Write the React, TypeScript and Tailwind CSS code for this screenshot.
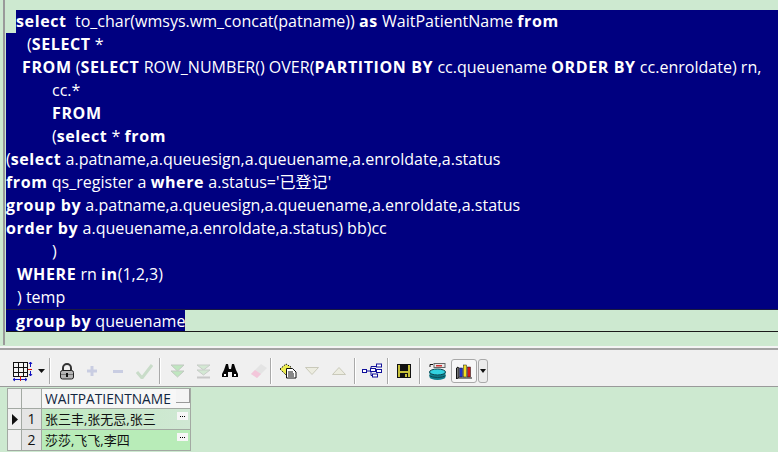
const kw = 'font-bold tracking-[0.6px]'

type Part = [string, boolean?]

const lines: { indent: string; parts: Part[] }[] = [
  { indent: 'pl-[21px]', parts: [['('], ['SELECT', true], [' *']] },
  { indent: 'pl-[16px]', parts: [['FROM', true], [' ('], ['SELECT', true], [' ROW_NUMBER() OVER('], ['PARTITION BY', true], [' cc.queuename '], ['ORDER BY', true], [' cc.enroldate) rn,']] },
  { indent: 'pl-[46px]', parts: [['cc.*']] },
  { indent: 'pl-[46px]', parts: [['FROM', true]] },
  { indent: 'pl-[46px]', parts: [['('], ['select', true], [' * '], ['from', true]] },
  { indent: 'pl-0', parts: [['('], ['select', true], [' a.patname,a.queuesign,a.queuename,a.enroldate,a.status']] },
  { indent: 'pl-0', parts: [['from', true], [' qs_register a '], ['where', true], [" a.status='已登记'"]] },
  { indent: 'pl-0', parts: [['group by', true], [' a.patname,a.queuesign,a.queuename,a.enroldate,a.status']] },
  { indent: 'pl-0', parts: [['order by', true], [' a.queuename,a.enroldate,a.status) bb)cc']] },
  { indent: 'pl-[46px]', parts: [[')']] },
  { indent: 'pl-[11px]', parts: [['WHERE', true], [' rn '], ['in', true], ['(1,2,3)']] },
  { indent: 'pl-[11px]', parts: [[') temp']] },
]

function Code({ parts }: { parts: Part[] }) {
  return (
    <>
      {parts.map(([text, bold], i) => (
        <span key={i} className={bold ? kw : ''}>
          {text}
        </span>
      ))}
    </>
  )
}

function Sep({ className }: { className: string }) {
  return <div className={`w-[2px] h-[26px] bg-[#a9a9a9] border-r border-white shrink-0 ${className}`} />
}

function Toolbar() {
  return (
    <div className="h-[37px] pt-[6px] bg-[#f0f0f0] border-b border-[#9a9a9a] flex items-center">
      {/* grid options */}
      <svg className="ml-[13px] shrink-0" width="20" height="21" viewBox="0 0 20 21">
        <rect x="0.500" y="1.500" width="14" height="14" fill="#f4f4f4" stroke="#111" />
        <path d="M5.500 1v15M10.500 1v15M0 6.500h15M0 11.500h15" stroke="#111" />
        <path d="M15 8.500h4" stroke="#d01010" />
        <path d="M17.500 1v5M17.500 10v5M16 3l1.500-2 1.500 2M16 13l1.500 2 1.500-2" stroke="#1010c0" fill="none" />
        <path d="M0 18.500h14M2 17l-2 1.500 2 1.500M12 17l2 1.500-2 1.500" stroke="#1010c0" fill="none" />
        <path d="M7.500 15v5" stroke="#d01010" />
      </svg>
      <svg className="ml-[5px] shrink-0" width="7" height="4" viewBox="0 0 7 4">
        <path d="M0 0h7L3.500 4z" fill="#111" />
      </svg>
      <Sep className="ml-[4px]" />
      {/* lock */}
      <svg className="ml-[9px] shrink-0" width="14" height="17" viewBox="0 0 14 17">
        <path d="M3 8V5a4 4 0 0 1 8 0v3" fill="none" stroke="#333" strokeWidth="2" />
        <rect x="0.500" y="7.500" width="13" height="8.500" rx="2" fill="#b5b5b5" stroke="#222" />
        <path d="M1 11.500h12" stroke="#777" />
        <rect x="6" y="10" width="2" height="4" fill="#111" />
      </svg>
      {/* plus */}
      <svg className="ml-[13px] shrink-0" width="10" height="10" viewBox="0 0 10 10">
        <path d="M3.500 0h3v3.500H10v3H6.500V10h-3V6.500H0v-3h3.500z" fill="#c9cde2" />
      </svg>
      {/* minus */}
      <svg className="ml-[16px] shrink-0" width="10" height="3" viewBox="0 0 10 3">
        <rect width="10" height="3" fill="#c9cde2" />
      </svg>
      {/* check */}
      <svg className="ml-[13px] shrink-0" width="17" height="15" viewBox="0 0 17 15">
        <path d="M1 8l5 6L16 1" fill="none" stroke="#c9dcc9" strokeWidth="3" />
      </svg>
      <Sep className="ml-[6px]" />
      {/* next + last record */}
      <svg className="ml-[9px] shrink-0" width="15" height="15" viewBox="0 0 15 15">
        <path d="M1 1h13L7.500 7z" fill="#bfe6bf" stroke="#c2c9c2" />
        <path d="M1 7h13l-6.500 6z" fill="#bfe6bf" stroke="#c2c9c2" />
      </svg>
      <svg className="ml-[11px] shrink-0" width="15" height="15" viewBox="0 0 15 15">
        <path d="M1 1h13L7.500 6z" fill="#d3e8d3" stroke="#c8cdc8" />
        <path d="M1 6h13l-6.500 5z" fill="#d3e8d3" stroke="#c8cdc8" />
        <path d="M1 13.500h13" stroke="#c8c8c8" strokeWidth="2" />
      </svg>
      {/* find */}
      <svg className="ml-[11px] shrink-0" width="16" height="14" viewBox="0 0 16 14">
        <path d="M4 0h2l1 5h2l1-5h2l2 6 2 4v3H10V8H6v5H0v-3l2-4z" fill="#050505" />
        <rect x="2" y="10" width="2" height="2" fill="#fff" />
        <rect x="12" y="10" width="2" height="2" fill="#fff" />
      </svg>
      {/* eraser */}
      <svg className="ml-[12px] shrink-0" width="18" height="17" viewBox="0 0 18 17">
        <path d="M1 11L11 1l6 4-10 10z" fill="#e4e4e4" />
        <path d="M1 11l4-4 6 4-4 4z" fill="#f3c6da" />
      </svg>
      <Sep className="ml-[2px]" />
      {/* clear / document */}
      <svg className="ml-[7px] shrink-0" width="18" height="16" viewBox="0 0 18 16">
        <path d="M1 6l6-5 5 3-5 8z" fill="#ecec50" stroke="#222" strokeDasharray="1.500 1" />
        <path d="M7.500 5.500h6l3.500 3.500v6H7.500z" fill="#fff" stroke="#111" />
        <path d="M9 9h5M9 11h6M9 13h6" stroke="#111" />
      </svg>
      {/* sort down / up */}
      <svg className="ml-[8px] shrink-0" width="14" height="8" viewBox="0 0 14 8">
        <path d="M0.500 0.500h13L7 7.500z" fill="#ecece0" stroke="#c9c9ba" />
      </svg>
      <svg className="ml-[13px] shrink-0" width="14" height="8" viewBox="0 0 14 8">
        <path d="M0.500 7.500h13L7 0.500z" fill="#ecece0" stroke="#c9c9ba" />
      </svg>
      <Sep className="ml-[8px]" />
      {/* tree */}
      <svg className="ml-[6px] shrink-0" width="20" height="16" viewBox="0 0 20 16">
        <path d="M5 8h4M9 3.500v9M9 3.500h6M9 8h6M9 12.500h6" stroke="#10109a" fill="none" />
        <rect x="0.500" y="6.500" width="4" height="3" fill="#fff" stroke="#10109a" />
        <rect x="14.500" y="1" width="5" height="3" fill="#fff" stroke="#10109a" />
        <rect x="8.500" y="5.500" width="5" height="3" fill="#fff" stroke="#10109a" />
        <rect x="14.500" y="6.500" width="5" height="3" fill="#fff" stroke="#10109a" />
        <rect x="10.500" y="11" width="5" height="3" fill="#fff" stroke="#10109a" />
      </svg>
      <Sep className="ml-[5px]" />
      {/* save */}
      <svg className="ml-[8px] shrink-0" width="14" height="14" viewBox="0 0 14 14">
        <rect width="14" height="14" fill="#111" />
        <rect x="1" y="1" width="12" height="12" fill="#c7c13a" />
        <rect x="3" y="1" width="8" height="6" fill="#111" />
        <rect x="3" y="9" width="8" height="5" fill="#111" />
        <rect x="8" y="10" width="2" height="3" fill="#c7c13a" />
      </svg>
      <Sep className="ml-[8px]" />
      {/* fetch to db */}
      <svg className="ml-[8px] shrink-0" width="17" height="17" viewBox="0 0 17 17">
        <path d="M1 4V1.500M1 1.500h3" stroke="#111" fill="none" />
        <rect x="5" y="0.500" width="11" height="4" fill="#e8e8e8" stroke="#666" />
        <rect x="7" y="2" width="6" height="1.500" fill="#d03030" />
        <ellipse cx="8.500" cy="14" rx="8" ry="3" fill="#0e7f8e" />
        <rect x="0.500" y="9" width="16" height="5" fill="#0e7f8e" />
        <ellipse cx="8.500" cy="9" rx="8" ry="3" fill="#32d2e0" stroke="#0a4650" />
        <path d="M0.500 12.500c2 2.500 14 2.500 16 0" stroke="#0a4650" fill="none" />
      </svg>
      {/* chart toggle */}
      <div className="ml-[5px] w-[26px] h-[24px] rounded-[3px] border border-[#a9a9a9] bg-[#f7f7f7] flex items-center justify-center shrink-0">
        <svg width="17" height="15" viewBox="0 0 17 15">
          <path d="M2 3v11h14" fill="none" stroke="#111" />
          <path d="M0.500 4l1.500-1v11l-1.500 1z" fill="#ddd" stroke="#111" />
          <rect x="3.500" y="4" width="3" height="9" fill="#2030c8" stroke="#111" strokeWidth="0.500" />
          <rect x="7.500" y="1" width="3" height="12" fill="#f4e020" stroke="#111" strokeWidth="0.500" />
          <rect x="11.500" y="3" width="3" height="10" fill="#d81818" stroke="#111" strokeWidth="0.500" />
        </svg>
      </div>
      <div className="ml-px w-[10px] h-[24px] rounded-[3px] border border-[#a9a9a9] bg-[#ececec] flex items-center justify-center shrink-0">
        <svg width="6" height="4" viewBox="0 0 6 4">
          <path d="M0 0h6L3 4z" fill="#111" />
        </svg>
      </div>
    </div>
  )
}

function RowDots() {
  return (
    <span className="w-[11px] h-[8px] mt-[3px] bg-[#f6f6f6] flex items-center justify-center gap-px shrink-0">
      <span className="w-px h-px bg-black" />
      <span className="w-px h-px bg-black" />
      <span className="w-px h-px bg-black" />
    </span>
  )
}

function ResultGrid() {
  const cell = 'border-r border-b border-[#a3a9a3]'
  return (
    <div className="mt-px ml-[7px] w-[184px] border-t border-l border-[#a3a9a3] text-[13px] leading-[20px] text-[#111]">
      <div className="flex h-[20px]">
        <div className={`w-[14px] bg-[#f0f0f0] ${cell}`} />
        <div className={`w-[20px] bg-[#f0f0f0] ${cell}`} />
        <div className={`flex-1 bg-[#f7f7f7] pl-[3px] flex justify-between text-[#12263f] text-[13.750px] ${cell}`}>
          <span>WAITPATIENTNAME</span>
          <span className="w-[14px] h-[14px] bg-[#f4f4f4] border-r border-b border-[#999] shrink-0" />
        </div>
      </div>
      <div className="flex h-[21px]">
        <div className={`w-[14px] bg-[#f0f0f0] flex items-center justify-center ${cell}`}>
          <svg width="6" height="11" viewBox="0 0 6 11">
            <path d="M0 0l6 5.500L0 11z" fill="#111" />
          </svg>
        </div>
        <div className={`w-[20px] bg-[#e5e5e5] text-center text-[14px] ${cell}`}>1</div>
        <div className={`flex-1 bg-gradient-to-r from-[#c0eac0] to-[#d0e8d4] pl-[3px] pr-[2px] flex justify-between ${cell}`}>
          <span>张三丰,张无忌,张三</span>
          <RowDots />
        </div>
      </div>
      <div className="flex h-[21px]">
        <div className={`w-[14px] bg-[#f0f0f0] ${cell}`} />
        <div className={`w-[20px] bg-[#e5e5e5] text-center text-[14px] ${cell}`}>2</div>
        <div className={`flex-1 bg-[#b8ecb8] pl-[3px] pr-[2px] flex justify-between ${cell}`}>
          <span>莎莎,飞飞,李四</span>
          <RowDots />
        </div>
      </div>
    </div>
  )
}

export default function App() {
  return (
    <div
      className="w-[778px] h-[452px] overflow-hidden bg-[#cde9d0]"
      style={{ fontFamily: '"Open Sans", "Noto Sans CJK SC", sans-serif' }}
    >
      {/* SQL editor */}
      <div className="ml-[3px] h-[345px] pt-[10px] pl-px border-l-2 border-[#9a9a9a] text-[16.050px] leading-[23px] text-white whitespace-pre">
        <div className="h-[23px] pl-[10px]">
          <div className="h-[23px] bg-[#000080]">
            <Code parts={[['select', true], ['  to_char(wmsys.wm_concat(patname)) '], ['as', true], [' WaitPatientName '], ['from', true]]} />
          </div>
        </div>
        <div className="bg-[#000080] border-b border-[#1a1a40]">
          {lines.map((line, i) => (
            <div key={i} className={`h-[23px] ${line.indent}`}>
              <Code parts={line.parts} />
            </div>
          ))}
        </div>
        <div className="h-[22px] border-b border-[#1a1a1a] flex">
          <div className="bg-[#000080] pl-[10px]">
            <Code parts={[['group by', true], [' queuename']]} />
          </div>
        </div>
      </div>

      {/* Splitter */}
      <div className="mt-px h-[4px] bg-[#f4f4f4] border-b-2 border-[#a3a3a3]" />
      <Toolbar />
      <ResultGrid />
    </div>
  )
}
